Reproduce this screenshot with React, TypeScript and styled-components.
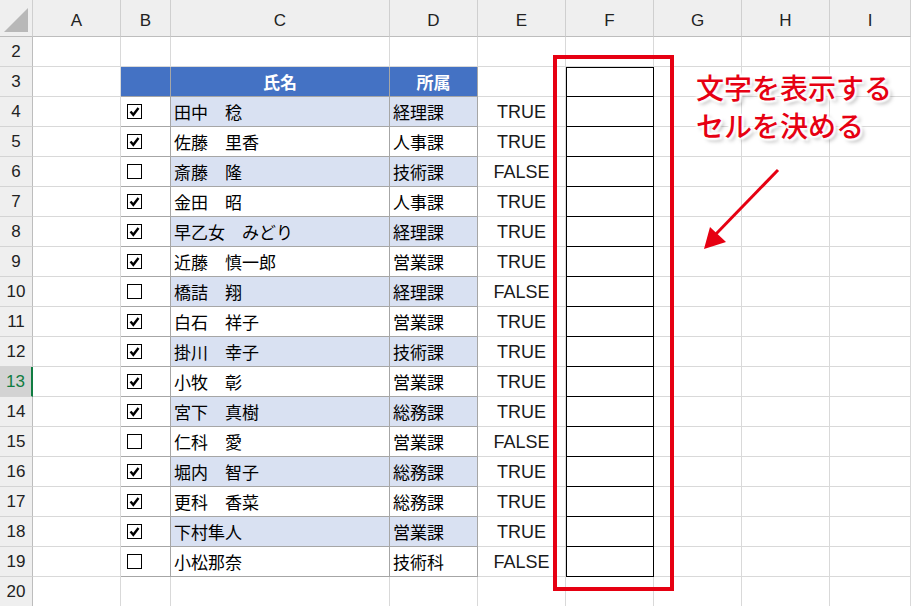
import React from 'react';
import styled, { createGlobalStyle } from 'styled-components';

const Global = createGlobalStyle`
  body { margin: 0; background: #fff; font-family: "Noto Sans CJK JP", "Liberation Sans", sans-serif; overflow: hidden; }
`;

const cols = ['A', 'B', 'C', 'D', 'E', 'F', 'G', 'H', 'I'];

const data: [boolean, string, string][] = [
  [true, '田中　稔', '経理課'],
  [true, '佐藤　里香', '人事課'],
  [false, '斎藤　隆', '技術課'],
  [true, '金田　昭', '人事課'],
  [true, '早乙女　みどり', '経理課'],
  [true, '近藤　慎一郎', '営業課'],
  [false, '橋詰　翔', '経理課'],
  [true, '白石　祥子', '営業課'],
  [true, '掛川　幸子', '技術課'],
  [true, '小牧　彰', '営業課'],
  [true, '宮下　真樹', '総務課'],
  [false, '仁科　愛', '営業課'],
  [true, '堀内　智子', '総務課'],
  [true, '更科　香菜', '総務課'],
  [true, '下村隼人', '営業課'],
  [false, '小松那奈', '技術科'],
];

const Sheet = styled.div`
  position: relative;
  width: 911px;
  height: 606px;
  display: grid;
  grid-template-columns: 33px 88px 50px 219px 88px 88px 88px 88px 88px 81px;
  grid-template-rows: 37px repeat(19, 30px);
  font-size: 17px;
  color: #000;
`;

const ColHead = styled.div`
  background: #efefef;
  border-right: 1px solid #cfcfcf;
  border-bottom: 1px solid #bdbdbd;
  display: flex;
  align-items: flex-end;
  justify-content: center;
  padding-bottom: 5px;
  box-sizing: border-box;
  font-family: "Liberation Sans", sans-serif;
  font-size: 17px;
  color: #222;
  position: relative;
`;

const Corner = styled.div`
  position: absolute;
  right: 4px;
  bottom: 4px;
  width: 0;
  height: 0;
  border-left: 24px solid transparent;
  border-bottom: 24px solid #b8b8b8;
`;

const RowHead = styled.div<{ $sel?: boolean }>`
  background: ${(p) => (p.$sel ? '#d3d3d3' : '#efefef')};
  color: ${(p) => (p.$sel ? '#107c41' : '#222')};
  border-right: ${(p) => (p.$sel ? '2px solid #107c41' : '1px solid #bdbdbd')};
  border-bottom: 1px solid #d4d4d4;
  box-sizing: border-box;
  display: flex;
  align-items: center;
  justify-content: center;
  font-family: "Liberation Sans", sans-serif;
  font-size: 17px;
`;

const Cell = styled.div<{ $bg?: string; $align?: string; $bold?: boolean; $color?: string }>`
  background: ${(p) => p.$bg || '#fff'};
  border-right: 1px solid ${(p) => (p.$bg ? '#a6a6a6' : '#d9d9d9')};
  border-bottom: 1px solid ${(p) => (p.$bg ? '#a6a6a6' : '#d9d9d9')};
  box-sizing: border-box;
  display: flex;
  align-items: center;
  justify-content: ${(p) => p.$align || 'flex-start'};
  padding: 0 3px;
  font-weight: ${(p) => (p.$bold ? 700 : 400)};
  color: ${(p) => p.$color || '#000'};
  white-space: nowrap;
`;

const BoxCell = styled.div<{ $top?: boolean }>`
  background: #fff;
  border-right: 1px solid #000;
  border-bottom: 1px solid #000;
  box-shadow: inset 1px ${(p) => (p.$top ? '1px' : '0')} 0 #000;
  box-sizing: border-box;
`;

const Num = styled.span`
  font-family: "Liberation Sans", sans-serif;
  color: #1a1a1a;
  font-size: 18px;
  padding-top: 2px;
`;

const Check = styled.span`
  width: 15px;
  height: 15px;
  border: 1px solid #000;
  box-sizing: border-box;
  margin-left: 3px;
  display: flex;
  align-items: center;
  justify-content: center;
`;

const RedFrame = styled.div`
  position: absolute;
  left: 553px;
  top: 55px;
  width: 121px;
  height: 536px;
  border: 4px solid #e60012;
  box-sizing: border-box;
  pointer-events: none;
`;

const Note = styled.div`
  position: absolute;
  left: 696px;
  top: 68px;
  color: #e60012;
  font-size: 28px;
  line-height: 38px;
  font-weight: 500;
  text-shadow: 2px 2px 2px #fff, -2px -2px 2px #fff, 2px -2px 2px #fff, -2px 2px 2px #fff, 3px 3px 4px rgba(0,0,0,0.35);
`;

const Arrow = styled.svg`
  position: absolute;
  left: 695px;
  top: 165px;
`;

export default function App() {
  const cells: React.ReactNode[] = [];
  cells.push(
    <ColHead key="corner"><Corner /></ColHead>
  );
  cols.forEach((c) => cells.push(<ColHead key={c}>{c}</ColHead>));
  for (let r = 2; r <= 20; r++) {
    cells.push(<RowHead key={'h' + r} $sel={r === 13}>{r}</RowHead>);
    const d = r >= 4 && r <= 19 ? data[r - 4] : null;
    const band = r >= 4 && r <= 19 && r % 2 === 0 ? '#d9e1f2' : undefined;
    cols.forEach((c) => {
      const k = c + r;
      if (r === 3 && (c === 'B' || c === 'C' || c === 'D')) {
        cells.push(
          <Cell key={k} $bg="#4472c4" $align="center" $bold $color="#fff">
            {c === 'C' ? '氏名' : c === 'D' ? '所属' : ''}
          </Cell>
        );
      } else if (d && c === 'B') {
        cells.push(
          <Cell key={k} $bg="#fff">
            <Check>
              {d[0] && (
                <svg width="11" height="11" viewBox="0 0 11 11">
                  <path d="M1.5 5.5 L4.3 8.8 L9.5 2" fill="none" stroke="#000" strokeWidth="2.4" />
                </svg>
              )}
            </Check>
          </Cell>
        );
      } else if (d && c === 'C') {
        cells.push(<Cell key={k} $bg={band || '#fff'}>{d[1]}</Cell>);
      } else if (d && c === 'D') {
        cells.push(<Cell key={k} $bg={band || '#fff'}>{d[2]}</Cell>);
      } else if (d && c === 'E') {
        cells.push(<Cell key={k} $align="center"><Num>{d[0] ? 'TRUE' : 'FALSE'}</Num></Cell>);
      } else if (c === 'F' && r >= 3 && r <= 19) {
        cells.push(<BoxCell key={k} $top={r === 3} />);
      } else {
        cells.push(<Cell key={k} />);
      }
    });
  }
  return (
    <>
      <Global />
      <Sheet>
        {cells}
        <RedFrame />
        <Note>
          文字を表示する
          <br />
          セルを決める
        </Note>
        <Arrow width="90" height="90" viewBox="0 0 90 90">
          <line x1="83" y1="5" x2="20" y2="70" stroke="#e60012" strokeWidth="3" />
          <polygon points="9,84 15,62 31,77" fill="#e60012" />
        </Arrow>
      </Sheet>
    </>
  );
}
